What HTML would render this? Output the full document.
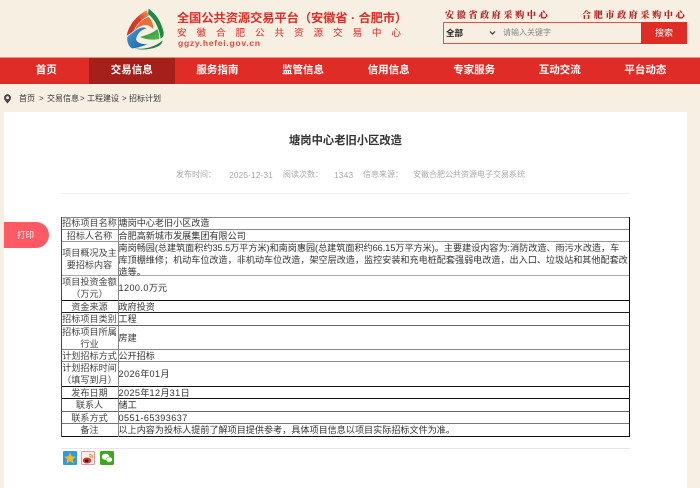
<!DOCTYPE html>
<html lang="zh"><head><meta charset="utf-8"><title>塘岗中心老旧小区改造</title>
<style>
*{margin:0;padding:0;box-sizing:border-box}
html,body{width:700px;height:488px;overflow:hidden;background:#f8efe3}
body{position:relative;font-family:"Liberation Sans","Noto Sans CJK SC",sans-serif;color:#333;filter:blur(.3px)}
.a{position:absolute;white-space:nowrap}
.nav{position:absolute;top:57px;height:27px;line-height:26px;width:85.6px;text-align:center;color:#fff;font-size:10.5px;font-weight:700}
.l{position:absolute;left:61px;width:569px;height:1px}
.c{position:absolute;white-space:nowrap;font-size:9.11px;line-height:12px;color:#333}
.k{left:62px;width:55px;text-align:center;color:#444;letter-spacing:.02px}
.v{left:118.5px}
.d{letter-spacing:.42px}
</style></head><body>

<svg class="a" style="left:120px;top:5px" width="50" height="50" viewBox="0 0 150 150">
<defs>
<linearGradient id="r" x1="0" y1="1" x2="1" y2="0"><stop offset="0" stop-color="#c9302a"/><stop offset=".6" stop-color="#e0392b"/><stop offset="1" stop-color="#e8a050"/></linearGradient>
<linearGradient id="g" x1="0" y1="0" x2="1" y2="1"><stop offset="0" stop-color="#1f8f45"/><stop offset="1" stop-color="#5bb847"/></linearGradient>
<linearGradient id="b" x1="0" y1="0" x2="1" y2="1"><stop offset="0" stop-color="#3f9bd0"/><stop offset="1" stop-color="#1a62a8"/></linearGradient>
</defs>
<path d="M20 92C27 58 50 32 80 16L86 32C66 42 50 56 42 76 34 84 26 88 20 92Z" fill="url(#r)"/>
<path d="M44 76C52 56 68 42 86 36 94 44 100 56 100 72 88 60 72 52 44 76Z" fill="#e4713a"/>
<path d="M86 11C108 27 124 50 131 82 132 92 128 98 122 101 118 72 106 44 84 27Z" fill="#1d8a43"/>
<path d="M60 96C76 92 100 84 112 72 116 82 118 92 118 102 98 106 78 104 60 96Z" fill="url(#g)"/>
<path d="M22 96C28 90 40 82 50 74 62 66 72 66 80 70 62 74 50 88 48 104 52 114 66 118 82 118 66 124 48 130 36 130 26 124 20 110 22 96Z" fill="url(#b)"/>
<path d="M44 130C72 134 102 128 128 106 126 116 120 122 110 126 88 134 62 136 44 130Z" fill="#1f7d4a"/>
</svg>

<div class="a" style="left:177px;top:10px;font-size:12.2px;line-height:16px;font-weight:700;color:#e02c26">全国公共资源交易平台（安徽省 · 合肥市）</div>
<div class="a" style="left:177px;top:26.5px;font-size:9.6px;line-height:13px;letter-spacing:9.9px;color:#e02c26">安徽合肥公共资源交易中心</div>
<div class="a" style="left:178px;top:37px;font-size:8.6px;line-height:12px;font-weight:700;letter-spacing:.7px;color:#e04a40">ggzy.hefei.gov.cn</div>

<div class="a" style="left:445px;top:9px;font-family:'Noto Serif CJK SC',serif;font-weight:900;font-size:9px;line-height:12px;letter-spacing:2.7px;color:#b9201f">安徽省政府采购中心</div>
<div class="a" style="left:582px;top:9px;font-family:'Noto Serif CJK SC',serif;font-weight:900;font-size:9px;line-height:12px;letter-spacing:2.7px;color:#b9201f">合肥市政府采购中心</div>

<div class="a" style="left:443px;top:22px;width:244px;height:22px;border:1px solid #e4514a"></div>
<div class="a" style="left:641px;top:22px;width:46px;height:22px;background:#e02c26;color:#fff;font-size:9px;line-height:22px;text-align:center">搜索</div>
<div class="a" style="left:446px;top:27px;font-size:8.5px;line-height:12px;color:#222;font-weight:700">全部</div>
<svg class="a" style="left:489px;top:30px" width="7" height="6" viewBox="0 0 7 6"><path d="M1 1.5L3.5 4 6 1.5" fill="none" stroke="#333" stroke-width="1.2"/></svg>
<div class="a" style="left:503px;top:27px;font-size:8px;line-height:12px;color:#888">请输入关键字</div>

<div class="a" style="left:0;top:57px;width:700px;height:27px;background:#e02c26;border-top:1px solid #e9917c"></div>
<div class="a" style="left:89px;top:58px;width:86px;height:26px;background:#a5201a"></div>
<div class="nav" style="left:3.5px">首页</div>
<div class="nav" style="left:89px">交易信息</div>
<div class="nav" style="left:174.6px">服务指南</div>
<div class="nav" style="left:260.2px">监管信息</div>
<div class="nav" style="left:345.8px">信用信息</div>
<div class="nav" style="left:431.4px">专家服务</div>
<div class="nav" style="left:517px">互动交流</div>
<div class="nav" style="left:602.6px">平台动态</div>

<svg class="a" style="left:3px;top:94px" width="9" height="10" viewBox="0 0 9 10"><path d="M4.5 9.6C3 7.6 1 5.8 1 3.8a3.5 3.5 0 0 1 7 0C8 5.8 6 7.6 4.5 9.6Z" fill="#444"/><circle cx="4.5" cy="3.8" r="1.5" fill="#f8efe3"/></svg>
<div class="a" style="left:19px;top:93px;font-size:8px;line-height:12px">首页</div>
<div class="a" style="left:39px;top:93px;font-size:8px;line-height:12px">&gt;</div>
<div class="a" style="left:47px;top:93px;font-size:8px;line-height:12px">交易信息</div>
<div class="a" style="left:80px;top:93px;font-size:8px;line-height:12px">&gt;</div>
<div class="a" style="left:87px;top:93px;font-size:8px;line-height:12px">工程建设</div>
<div class="a" style="left:122px;top:93px;font-size:8px;line-height:12px">&gt;</div>
<div class="a" style="left:129px;top:93px;font-size:8px;line-height:12px">招标计划</div>

<div class="a" style="left:4px;top:112px;width:683px;height:376px;background:#fff"></div>

<div class="a" style="left:289px;top:133px;font-size:11.3px;line-height:16px;font-weight:700;color:#333">塘岗中心老旧小区改造</div>
<div class="a" style="left:176px;top:169px;font-size:8px;line-height:12px;color:#aaa">发布时间：</div>
<div class="a" style="left:229px;top:169px;font-size:8.6px;line-height:12px;color:#aaa">2025-12-31</div>
<div class="a" style="left:283px;top:169px;font-size:8px;line-height:12px;color:#aaa">阅读次数：</div>
<div class="a" style="left:334px;top:169px;font-size:8.6px;line-height:12px;color:#aaa">1343</div>
<div class="a" style="left:363px;top:169px;font-size:8px;line-height:12px;color:#aaa">信息来源：</div>
<div class="a" style="left:413px;top:169px;font-size:8px;line-height:12px;color:#aaa">安徽合肥公共资源电子交易系统</div>
<div class="l" style="top:193px;background:#efefef"></div>

<div class="a" style="left:4px;top:222px;width:45px;height:26px;background:#ff5a64;border-radius:0 13px 13px 0;color:#fff;font-size:8.5px;line-height:26px;text-align:center;padding-right:2px">打印</div>

<div class="l" style="top:217px;background:#888"></div>
<div class="l" style="top:229px;background:#888"></div>
<div class="l" style="top:241px;background:#999"></div>
<div class="l" style="top:275px;background:#aaa"></div>
<div class="l" style="top:300px;background:#111"></div>
<div class="l" style="top:312px;background:#222"></div>
<div class="l" style="top:325px;background:#666"></div>
<div class="l" style="top:349px;background:#888"></div>
<div class="l" style="top:361px;background:#888"></div>
<div class="l" style="top:386px;background:#111"></div>
<div class="l" style="top:398px;background:#111"></div>
<div class="l" style="top:411px;background:#666"></div>
<div class="l" style="top:423px;background:#777"></div>
<div class="l" style="top:436px;background:#111"></div>
<div class="a" style="left:61px;top:217px;width:1px;height:220px;background:#444"></div>
<div class="a" style="left:117.5px;top:217px;width:1px;height:220px;background:#888"></div>
<div class="a" style="left:629px;top:217px;width:1px;height:220px;background:#111"></div>

<div class="c k" style="top:217px">招标项目名称</div><div class="c v" style="top:217px">塘岗中心老旧小区改造</div>
<div class="c k" style="top:229.5px">招标人名称</div><div class="c v" style="top:229.5px">合肥高新城市发展集团有限公司</div>
<div class="c k" style="top:247px">项目概况及主<br>要招标内容</div>
<div class="c v" style="top:241.5px">南岗畅园(总建筑面积约35.5万平方米)和南岗惠园(总建筑面积约66.15万平方米)。主要建设内容为:消防改造、雨污水改造，车<br>库顶棚维修；机动车位改造，非机动车位改造，架空层改造，监控安装和充电桩配套强弱电改造，出入口、垃圾站和其他配套改<br>造等。</div>
<div class="c k" style="top:276px">项目投资金额<br>（万元）</div><div class="c v" style="top:282px"><span class="d">1200.0</span>万元</div>
<div class="c k" style="top:300.5px">资金来源</div><div class="c v" style="top:300.5px">政府投资</div>
<div class="c k" style="top:313px">招标项目类别</div><div class="c v" style="top:313px">工程</div>
<div class="c k" style="top:325.5px">招标项目所属<br>行业</div><div class="c v" style="top:331.5px">房建</div>
<div class="c k" style="top:350px">计划招标方式</div><div class="c v" style="top:350px">公开招标</div>
<div class="c k" style="top:362px">计划招标时间<br>（填写到月）</div><div class="c v" style="top:368px"><span class="d">2026</span>年<span class="d">01</span>月</div>
<div class="c k" style="top:386.5px">发布日期</div><div class="c v" style="top:386.5px"><span class="d">2025</span>年<span class="d">12</span>月<span class="d">31</span>日</div>
<div class="c k" style="top:398.5px">联系人</div><div class="c v" style="top:398.5px">储工</div>
<div class="c k" style="top:411.5px">联系方式</div><div class="c v" style="top:411.5px"><span class="d">0551-65393637</span></div>
<div class="c k" style="top:424px">备注</div><div class="c v" style="top:424px">以上内容为投标人提前了解项目提供参考，具体项目信息以项目实际招标文件为准。</div>

<div class="l" style="top:448px;background:#e6e6e6"></div>

<svg class="a" style="left:63px;top:451px" width="14" height="14" viewBox="0 0 14 14"><rect width="14" height="14" rx="1" fill="#2f9ae0"/><path d="M7 1.5L8.7 5.3 12.8 5.7 9.7 8.4 10.6 12.5 7 10.3 3.4 12.5 4.3 8.4 1.2 5.7 5.3 5.3Z" fill="#f5b81f"/></svg>
<svg class="a" style="left:81px;top:451px" width="14" height="14" viewBox="0 0 14 14"><rect x=".5" y=".5" width="13" height="13" rx="1" fill="#fbeeee" stroke="#e39a9a"/><ellipse cx="6" cy="9.5" rx="4.2" ry="3" fill="#d9322e"/><ellipse cx="5.6" cy="9.8" rx="1.8" ry="1.4" fill="#222"/><path d="M8 3.2A3.5 3.5 0 0 1 11.8 7M8 5.2A1.6 1.6 0 0 1 10 7" fill="none" stroke="#ef9a25" stroke-width="1.2"/></svg>
<svg class="a" style="left:100px;top:451px" width="14" height="14" viewBox="0 0 14 14"><rect width="14" height="14" rx="1.5" fill="#3fa61f"/><ellipse cx="5.6" cy="5.8" rx="3.8" ry="3.1" fill="#fff"/><ellipse cx="9.2" cy="8.6" rx="3.2" ry="2.6" fill="#fff" stroke="#3fa61f" stroke-width=".5"/></svg>

</body></html>
